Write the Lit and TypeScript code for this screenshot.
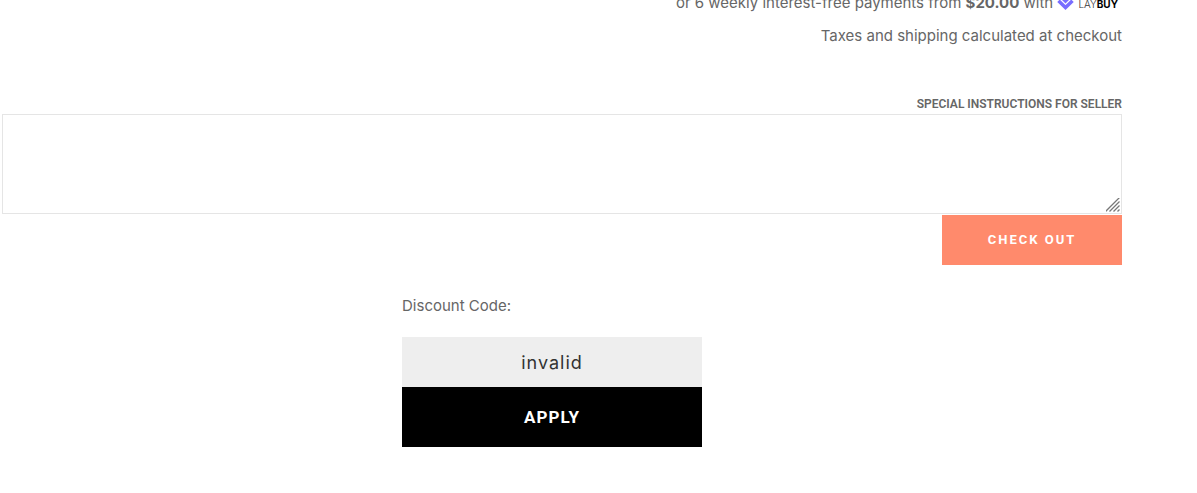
import { LitElement, html, css } from "lit";
import { customElement, state } from "lit/decorators.js";

@customElement("laybuy-logo")
export class LaybuyLogo extends LitElement {
  static styles = css`
    :host {
      display: inline-flex;
      align-items: center;
      gap: 4px;
      margin-right: 4px;
      vertical-align: middle;
      font: 300 10px/16px Inter, sans-serif;
      color: #333;
    }
    .mark {
      display: block;
      width: 17px;
      height: 16px;
    }
    .strong {
      font-weight: 700;
      color: #000;
    }
  `;

  render() {
    return html`
      <svg class="mark" viewBox="0 0 17 16" aria-hidden="true">
        <path
          d="M1.5 4.8 8.5 11.6l7-6.8M5.3 1.8 8.5 5l3.2-3.2"
          fill="none"
          stroke="#786dff"
          stroke-width="3.5"
        />
      </svg>
      <span>LAY<span class="strong">BUY</span></span>
    `;
  }
}

@customElement("app-root")
export class AppRoot extends LitElement {
  static styles = css`
    :host {
      display: block;
      overflow: hidden;
      background: #fff;
      color: #666;
      font: 400 15px/24px Inter, sans-serif;
    }
    * {
      box-sizing: border-box;
    }
    .cart {
      margin: -9px 75px 0 2px;
      padding-bottom: 46px;
    }
    .summary {
      display: flex;
      flex-direction: column;
      align-items: flex-end;
      gap: 9px;
    }
    .summary p {
      margin: 0;
    }
    .note {
      display: flex;
      flex-direction: column;
      margin-top: 47px;
    }
    .note-label {
      align-self: flex-end;
      padding-bottom: 1px;
      font-family: Roboto, sans-serif;
      font-size: 12px;
      font-weight: 600;
      line-height: 18px;
      text-transform: uppercase;
    }
    .note-field {
      display: block;
      width: 100%;
      height: 100px;
      padding: 8px 10px;
      border: 1px solid #e5e5e5;
      border-radius: 0;
      outline: none;
      background: #fff;
      color: inherit;
      font: inherit;
      resize: both;
    }
    .note-field::-webkit-scrollbar {
      width: 17px;
      height: 17px;
    }
    .note-field::-webkit-resizer {
      background: url("data:image/svg+xml,%3Csvg xmlns='http://www.w3.org/2000/svg' width='17' height='17'%3E%3Cpath d='M1.5 15.5l14-14M5.5 15.5l10-10M9.5 15.5l6-6M13.5 15.5l2-2' stroke='%23777' stroke-width='1.3'/%3E%3C/svg%3E")
        no-repeat right bottom;
    }
    .actions {
      display: flex;
      justify-content: flex-end;
      margin-top: 1px;
    }
    button {
      border: 0;
      border-radius: 0;
      color: #fff;
      font-family: Roboto, sans-serif;
      text-transform: uppercase;
      cursor: pointer;
    }
    .checkout {
      width: 180px;
      height: 50px;
      padding-bottom: 2px;
      background: #ff8a6c;
      font-size: 13px;
      font-weight: 700;
      letter-spacing: 2px;
    }
    .discount {
      display: flex;
      justify-content: center;
      margin-top: 29px;
      padding-right: 20px;
    }
    .discount-form {
      display: flex;
      flex-direction: column;
      width: 300px;
    }
    .discount-label {
      margin-bottom: 19px;
    }
    .discount-input {
      width: 100%;
      height: 50px;
      padding: 0 10px;
      border: 0;
      border-radius: 0;
      outline: none;
      background: #eee;
      color: #333;
      font: 400 18px/24px Inter, sans-serif;
      letter-spacing: 1px;
      text-align: center;
    }
    .apply {
      height: 60px;
      background: #000;
      font-size: 17px;
      font-weight: 700;
      letter-spacing: 1px;
    }
  `;

  @state() private code = "invalid";

  private onCode(event: Event) {
    this.code = (event.target as HTMLInputElement).value;
  }

  render() {
    return html`
      <main class="cart">
        <section class="summary">
          <p>
            or 6 weekly interest-free payments from <strong>$20.00</strong> with
            <laybuy-logo></laybuy-logo>
          </p>
          <p>Taxes and shipping calculated at checkout</p>
        </section>
        <section class="note">
          <label class="note-label" for="note">Special instructions for seller</label>
          <textarea class="note-field" id="note" name="note"></textarea>
        </section>
        <div class="actions">
          <button class="checkout" type="submit">Check out</button>
        </div>
        <section class="discount">
          <form class="discount-form" @submit=${(e: Event) => e.preventDefault()}>
            <label class="discount-label" for="code">Discount Code:</label>
            <input
              class="discount-input"
              id="code"
              type="text"
              .value=${this.code}
              @input=${this.onCode}
            />
            <button class="apply" type="submit">Apply</button>
          </form>
        </section>
      </main>
    `;
  }
}
